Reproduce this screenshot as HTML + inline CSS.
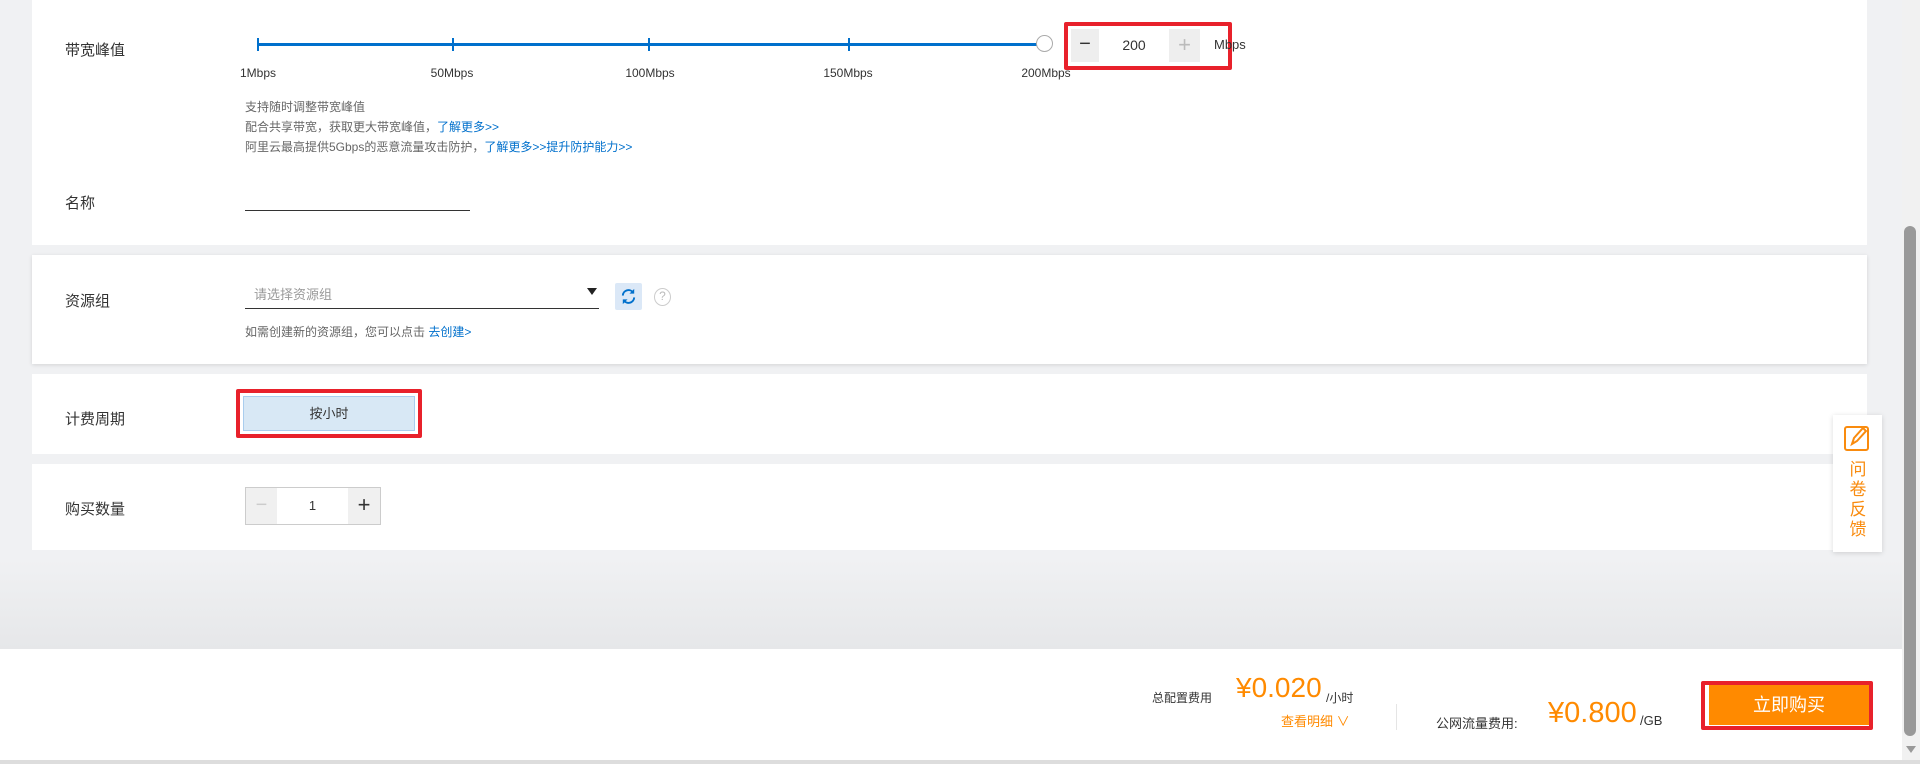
<!DOCTYPE html>
<html><head><meta charset="utf-8"><style>
*{margin:0;padding:0;box-sizing:border-box}
body{width:1920px;height:764px;overflow:hidden;background:#f0f1f3;font-family:"Liberation Sans","Noto Sans CJK SC",sans-serif;color:#333;position:relative;font-size:13px}
.a{position:absolute}
.card{position:absolute;left:32px;width:1835px;background:#fff}
.lbl{position:absolute;left:65px;font-size:15px;color:#333}
.hint{font-size:12px;color:#666;white-space:nowrap}
.blue{color:#0070cc}
.tick{position:absolute;top:38px;width:2px;height:13px;background:#0070cc}
.sl{position:absolute;top:66px;font-size:12px;color:#333;transform:translateX(-50%)}
</style></head><body>
<div class="card" style="top:0;height:245px"></div>
<div class="lbl" style="top:39px">带宽峰值</div>
<div class="a" style="left:257px;top:43px;width:787px;height:3px;background:#0070cc"></div>
<div class="tick" style="left:257px"></div><div class="tick" style="left:452px"></div><div class="tick" style="left:648px"></div><div class="tick" style="left:848px"></div>
<div class="a" style="left:1036px;top:35px;width:17px;height:17px;border-radius:50%;border:1px solid #aaa;background:#fff"></div>
<div class="sl" style="left:258px">1Mbps</div><div class="sl" style="left:452px">50Mbps</div><div class="sl" style="left:650px">100Mbps</div><div class="sl" style="left:848px">150Mbps</div><div class="sl" style="left:1046px">200Mbps</div>
<div class="a" style="left:1064px;top:22px;width:168px;height:48px;border:4px solid #e8212b;border-radius:2px"></div>
<div class="a" style="left:1071px;top:29px;width:129px;height:33px;background:#fff"></div>
<div class="a" style="left:1071px;top:29px;width:28px;height:33px;background:#eee;font-size:20px;text-align:center;line-height:31px;color:#333">−</div>
<div class="a" style="left:1099px;top:29px;width:70px;height:33px;text-align:center;line-height:33px;font-size:14px">200</div>
<div class="a" style="left:1169px;top:29px;width:31px;height:33px;background:#eee;font-size:22px;text-align:center;line-height:31px;color:#bbb">+</div>
<div class="a" style="left:1214px;top:37px;font-size:13px">Mbps</div>
<div class="a hint" style="left:245px;top:98px">支持随时调整带宽峰值</div>
<div class="a hint" style="left:245px;top:118px">配合共享带宽，获取更大带宽峰值，<span class="blue">了解更多&gt;&gt;</span></div>
<div class="a hint" style="left:245px;top:138px">阿里云最高提供5Gbps的恶意流量攻击防护，<span class="blue">了解更多&gt;&gt;提升防护能力&gt;&gt;</span></div>
<div class="lbl" style="top:192px">名称</div>
<div class="a" style="left:245px;top:210px;width:225px;height:1px;background:#333"></div>

<div class="card" style="top:255px;height:109px;box-shadow:0 1px 4px rgba(0,0,0,.12)"></div>
<div class="lbl" style="top:290px">资源组</div>
<div class="a" style="left:254px;top:284px;font-size:13px;color:#999">请选择资源组</div>
<div class="a" style="left:245px;top:308px;width:354px;height:1px;background:#333"></div>
<div class="a" style="left:587px;top:288px;width:0;height:0;border-left:5px solid transparent;border-right:5px solid transparent;border-top:7px solid #222"></div>
<div class="a" style="left:615px;top:283px;width:27px;height:27px;background:#dbe8f7;border-radius:2px"></div>
<svg class="a" style="left:619px;top:287px" width="19" height="19" viewBox="0 0 20 20"><path d="M4 9a6 6 0 0 1 11-3M16 11a6 6 0 0 1-11 3" fill="none" stroke="#0070cc" stroke-width="2"/><path d="M16 2v5h-5z M4 18v-5h5z" fill="#0070cc"/></svg>
<div class="a" style="left:654px;top:288px;width:17px;height:18px;border:1.5px solid #ccc;border-radius:50%;text-align:center;font-size:12px;line-height:15px;color:#bbb">?</div>
<div class="a hint" style="left:245px;top:323px">如需创建新的资源组，您可以点击 <span class="blue">去创建&gt;</span></div>

<div class="card" style="top:374px;height:80px"></div>
<div class="lbl" style="top:408px">计费周期</div>
<div class="a" style="left:236px;top:389px;width:186px;height:49px;border:4px solid #e8212b;border-radius:2px"></div>
<div class="a" style="left:243px;top:396px;width:172px;height:35px;background:#d8e8f5;border:1px solid #a9cdee;text-align:center;line-height:33px;font-size:13px">按小时</div>

<div class="card" style="top:464px;height:86px"></div>
<div class="lbl" style="top:498px">购买数量</div>
<div class="a" style="left:245px;top:487px;width:136px;height:38px;border:1px solid #ccc;background:#fff"></div>
<div class="a" style="left:246px;top:488px;width:31px;height:36px;background:#f0f0f0;text-align:center;line-height:34px;font-size:20px;color:#ccc">−</div>
<div class="a" style="left:277px;top:488px;width:71px;height:36px;text-align:center;line-height:36px;font-size:13px">1</div>
<div class="a" style="left:348px;top:488px;width:32px;height:36px;background:#f0f0f0;text-align:center;line-height:34px;font-size:22px;color:#333">+</div>

<div class="a" style="left:1833px;top:415px;width:49px;height:137px;background:#fff;box-shadow:0 1px 5px rgba(0,0,0,.15)"></div>
<svg class="a" style="left:1843px;top:424px" width="28" height="28" viewBox="0 0 28 28"><rect x="2" y="3" width="23" height="23" rx="2" fill="none" stroke="#f98b0e" stroke-width="2"/><path d="M9 20l2-6 9-10 3 3-9 10z" fill="none" stroke="#f98b0e" stroke-width="2"/></svg>
<div class="a" style="left:1848px;top:460px;width:20px;font-size:17px;line-height:20px;color:#f98b0e;text-align:center">问卷反馈</div>

<div class="a" style="left:0;top:560px;width:1902px;height:89px;background:linear-gradient(#f0f1f3,#e6e7e9)"></div>
<div class="a" style="left:0;top:649px;width:1902px;height:112px;background:#fff"></div>
<div class="a" style="left:0;top:760px;width:1920px;height:4px;background:#ddd"></div>
<div class="a" style="left:1152px;top:689px;font-size:12px;color:#333">总配置费用</div>
<div class="a" style="left:1236px;top:672px;font-size:28px;color:#ff8a00">¥0.020</div>
<div class="a" style="left:1326px;top:689px;font-size:12px;color:#333">/小时</div>
<div class="a" style="left:1281px;top:711px;font-size:13px;color:#ff8a00">查看明细 ∨</div>
<div class="a" style="left:1396px;top:704px;width:1px;height:26px;background:#e5e5e5"></div>
<div class="a" style="left:1436px;top:713px;font-size:13px;color:#333">公网流量费用:</div>
<div class="a" style="left:1548px;top:697px;font-size:29px;color:#ff8a00">¥0.800</div>
<div class="a" style="left:1640px;top:713px;font-size:13px;color:#333">/GB</div>
<div class="a" style="left:1701px;top:681px;width:172px;height:49px;border:4px solid #e8212b;border-radius:2px"></div>
<div class="a" style="left:1709px;top:685px;width:160px;height:40px;background:#ff8a00;color:#fff;text-align:center;line-height:40px;font-size:18px">立即购买</div>

<div class="a" style="left:1902px;top:0;width:18px;height:760px;background:#f1f1f1"></div>
<div class="a" style="left:1904px;top:226px;width:12px;height:510px;background:#999;border-radius:6px"></div>
<div class="a" style="left:1906px;top:746px;border-left:5px solid transparent;border-right:5px solid transparent;border-top:7px solid #999"></div>
</body></html>
